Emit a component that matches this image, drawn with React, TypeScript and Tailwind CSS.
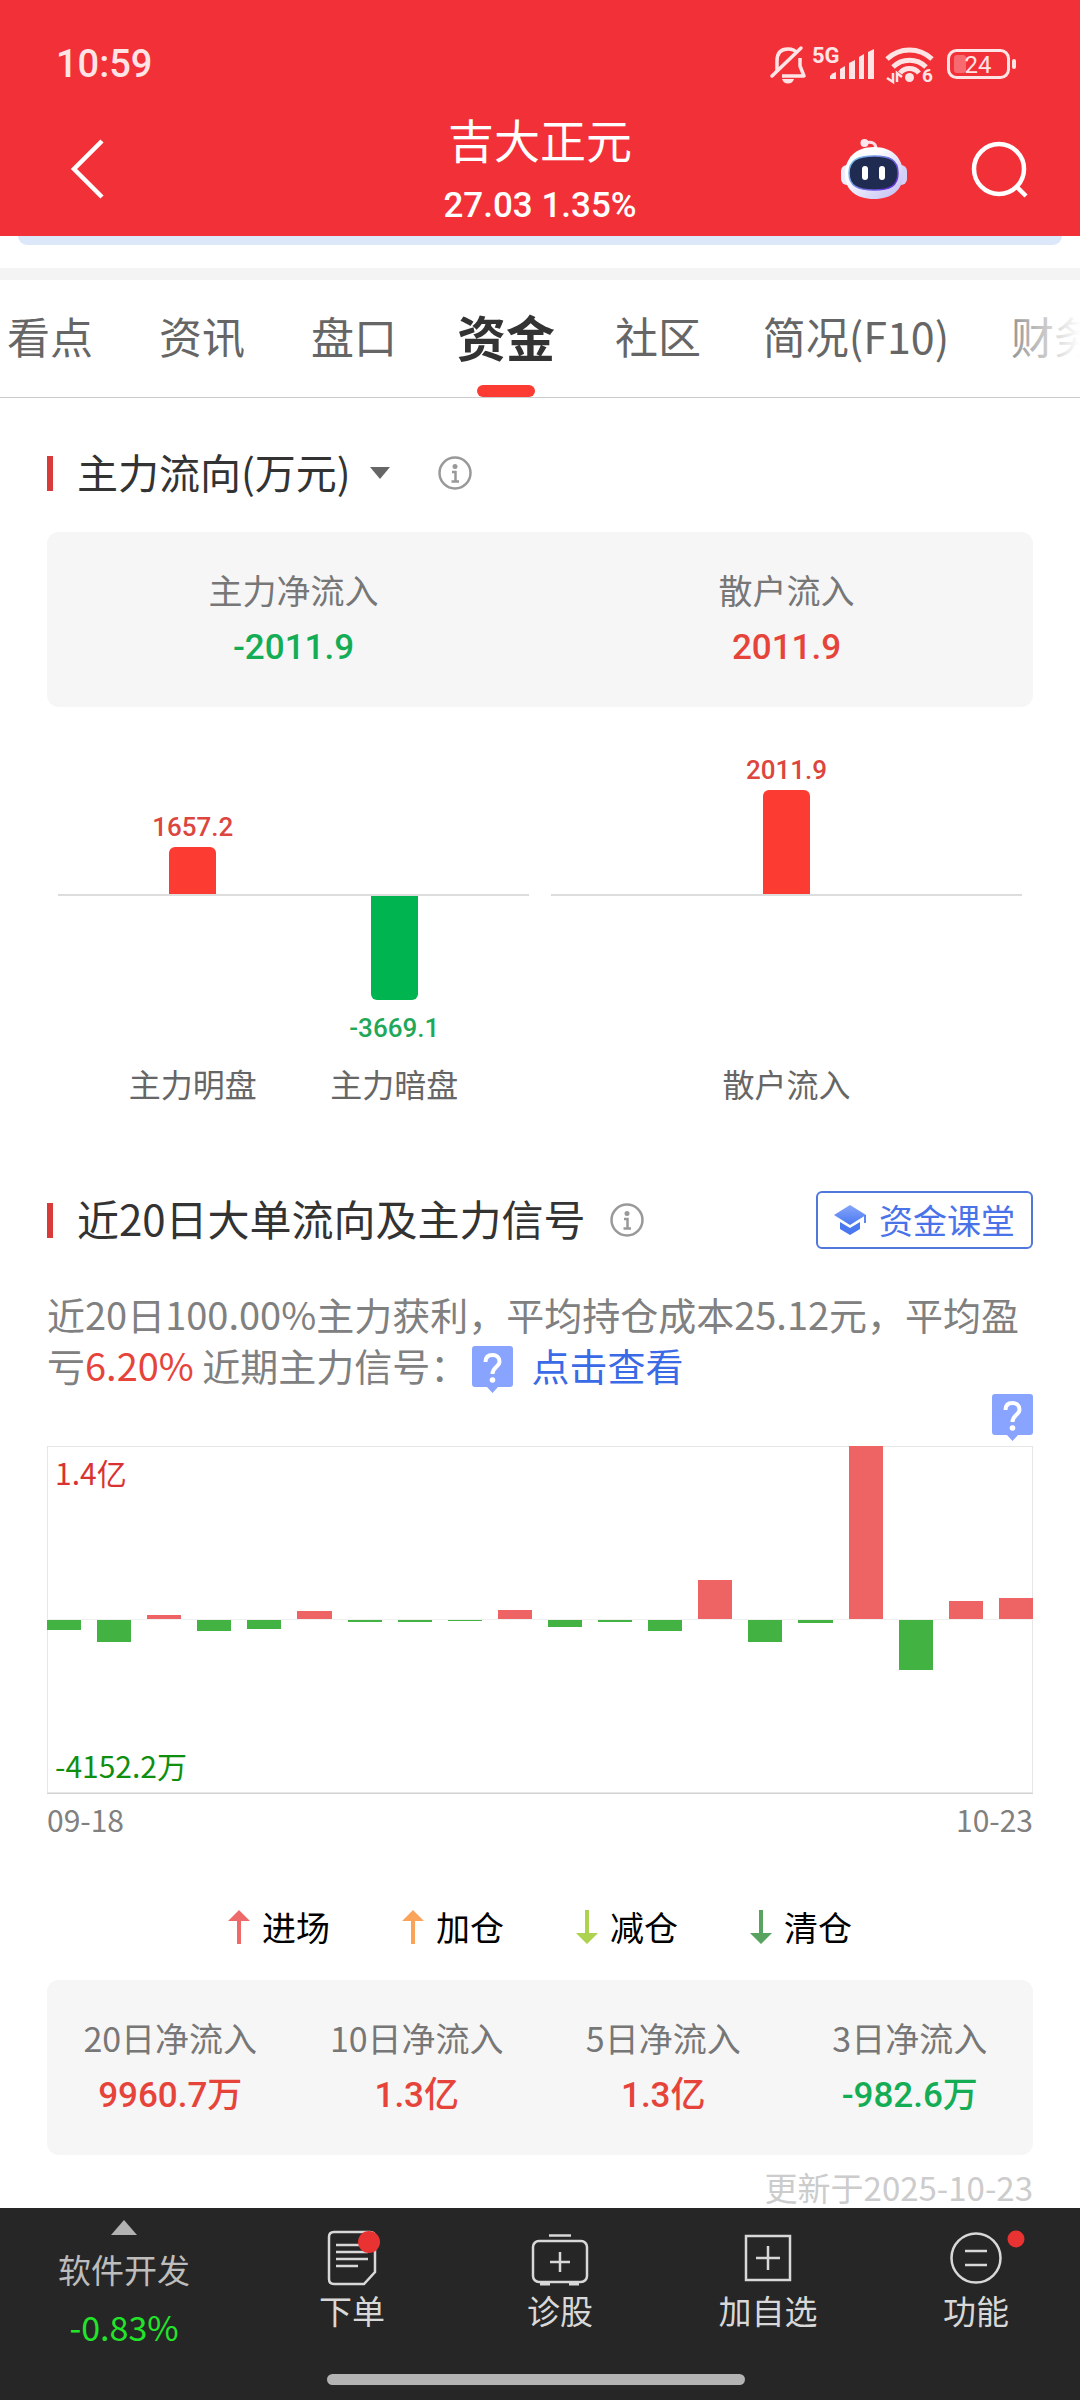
import { useState } from "react";

const TABS = ["看点", "资讯", "盘口", "资金", "社区", "简况(F10)", "财务"];

const MAIN_FLOW = [
  { label: "主力明盘", value: 1657.2 },
  { label: "主力暗盘", value: -3669.1 },
];

const RETAIL_FLOW = [{ label: "散户流入", value: 2011.9 }];

// Net inflow of the last 20 trading days, in 万元
const DAILY_FLOW = [
  -800, -1780, 320, -890, -730, 660, -160, -160, -40, 700,
  -560, -160, -890, 3140, -1780, -240, 14000, -4020, 1450, 1690,
];
const DAILY_MAX = 14000;

const LEGEND = [
  { label: "进场", up: true, color: "#ee6a6a" },
  { label: "加仓", up: true, color: "#f9a35b" },
  { label: "减仓", up: false, color: "#acd24f" },
  { label: "清仓", up: false, color: "#57a35f" },
];

const MAIN_STATS = [
  { label: "主力净流入", value: "-2011.9" },
  { label: "散户流入", value: "2011.9" },
];

const PERIOD_STATS = [
  { label: "20日净流入", value: "9960.7万" },
  { label: "10日净流入", value: "1.3亿" },
  { label: "5日净流入", value: "1.3亿" },
  { label: "3日净流入", value: "-982.6万" },
];

function StatusIcons() {
  return (
    <svg className="w-[248px] h-10 overflow-visible" viewBox="0 0 248 40" fill="none" stroke="#ffe4e5" aria-hidden="true">
      {/* muted bell */}
      <path d="M7 28 V17 C7 9 11 5 18 5 C22 5 25 6 27 9 M30 14 V22 L34 32 H12" strokeWidth="3.5" strokeLinejoin="round" />
      <path d="M2 32 L31 4" strokeWidth="3.5" strokeLinecap="round" />
      <path d="M12 35 H24 C23 38 21 39.500 18 39.500 C15 39.500 13 38 12 35 Z" fill="#ffe4e5" stroke="none" />
      {/* signal */}
      <text x="42" y="19" fontSize="22" fontWeight="700" fill="#ffe4e5" stroke="none">5G</text>
      <g fill="#ffe4e5" stroke="none">
        <path d="M60 35 V32 Q62 29 66 28 V35 Z" />
        <path d="M70 35 V25 L75 22 V35 Z" />
        <path d="M79 35 V19 L85 16 V35 Z" />
        <path d="M89 35 V13 L94 10 V35 Z" />
        <path d="M98 35 V8 L104 5 V35 Z" />
      </g>
      {/* wifi */}
      <path d="M117 15 C130 3 149 3 162 15" strokeWidth="5" />
      <path d="M123 23 C132 14 147 14 156 23" strokeWidth="5" />
      <path d="M130 29 C135 23 144 23 149 29" strokeWidth="5" />
      <circle cx="139.500" cy="33.500" r="4.500" fill="#ffe4e5" stroke="none" />
      <path d="M123 29 V38 L117 34 M127 38 V29 L132 33" strokeWidth="2.500" />
      <text x="152" y="38" fontSize="19" fontWeight="700" fill="#ffe4e5" stroke="none">6</text>
      {/* battery */}
      <rect x="178.500" y="6.500" width="60" height="27" rx="8" strokeWidth="3" />
      <rect x="184" y="11" width="12" height="18" rx="3" fill="#f76a70" stroke="none" />
      <rect x="242" y="15" width="4" height="10" rx="2" fill="#ffe4e5" stroke="none" />
      <text x="208" y="29" fontSize="24" textAnchor="middle" fill="#ffe4e5" stroke="none">24</text>
    </svg>
  );
}

function RobotIcon() {
  return (
    <svg className="w-[68px] h-[62px]" viewBox="0 0 68 62" aria-hidden="true">
      <defs>
        <linearGradient id="shell" x1="0" y1="0" x2="1" y2="1">
          <stop offset="0.3" stopColor="#ffffff" />
          <stop offset="1" stopColor="#bdb9f4" />
        </linearGradient>
        <linearGradient id="rim" x1="0" y1="0" x2="1" y2="0.600">
          <stop offset="0" stopColor="#7fd0f0" />
          <stop offset="1" stopColor="#6a35d8" />
        </linearGradient>
      </defs>
      <path d="M25 5 C32 3 36 5 36 11" fill="none" stroke="#fbdfe6" strokeWidth="3" />
      <circle cx="24.500" cy="5" r="4" fill="#fbe6ee" />
      <rect x="1" y="27" width="12" height="20" rx="6" fill="#ececfb" />
      <rect x="55" y="27" width="12" height="20" rx="6" fill="#d2d1f8" />
      <path d="M34 9 C52 9 63 20 63 36 C63 52 52 61 34 61 C16 61 5 52 5 36 C5 20 16 9 34 9 Z" fill="url(#shell)" />
      <path d="M34 18 C50 18 58 22 58 35 C58 48 50 52 34 52 C18 52 9 48 9 35 C9 22 18 18 34 18 Z" fill="#1f2b50" stroke="url(#rim)" strokeWidth="1.500" />
      <rect x="22" y="28" width="6" height="14" rx="3" fill="#fff" />
      <rect x="39" y="28" width="6" height="14" rx="3" fill="#fff" />
    </svg>
  );
}

function InfoButton() {
  return (
    <button aria-label="说明">
      <svg className="w-[34px] h-[34px]" viewBox="0 0 34 34" fill="none" stroke="#999" strokeWidth="2.500">
        <circle cx="17" cy="17" r="15.500" />
        <circle cx="17" cy="10.500" r="2.500" fill="#999" stroke="none" />
        <path d="M14 16 H17.500 V25 M13.500 25.500 H21" />
      </svg>
    </button>
  );
}

function QuestionBadge({ className = "" }) {
  return (
    <svg className={`w-[41px] h-[47px] ${className}`} viewBox="0 0 41 47" aria-hidden="true">
      <path d="M3 0 H38 Q41 0 41 3 V38 Q41 41 38 41 H26 L20.500 47 L15 41 H3 Q0 41 0 38 V3 Q0 0 3 0 Z" fill="#89a4ff" />
      <path d="M13.500 16 C13.500 11 16.500 9 20.500 9 C24.500 9 27.500 11.500 27.500 15.500 C27.500 21 20.500 20.500 20.500 28" fill="none" stroke="#fff" strokeWidth="4" />
      <circle cx="20.500" cy="34" r="2.800" fill="#fff" />
    </svg>
  );
}

function StatCard({ items }: { items: { label: string; value: string }[] }) {
  return (
    <dl className="flex rounded-xl bg-[#f6f6f6] pt-[30px] pb-[31px] text-center">
      {items.map((item) => (
        <div key={item.label} className="flex-1">
          <dt className="text-[34px] leading-[56px] text-[#777]">{item.label}</dt>
          <dd
            className={`mt-0.5 font-[Roboto,'Noto_Sans_CJK_SC',sans-serif] text-[35px] leading-[56px] font-medium ${
              item.value.startsWith("-") ? "text-[#14ad55]" : "text-[#e6443b]"
            }`}
          >
            {item.value}
          </dd>
        </div>
      ))}
    </dl>
  );
}

function FlowBars({ items }: { items: { label: string; value: number }[] }) {
  const max = Math.max(...items.map((i) => Math.abs(i.value)));
  const height = (v: number) => Math.round((Math.abs(v) / max) * 104);
  const valueClass = "font-[Roboto,sans-serif] text-[26px] leading-10 font-medium";

  return (
    <div className="flex-1 text-center">
      <div className="flex items-end h-[189px] px-[34px] border-b-2 border-[#ddd]">
        {items.map((i) => (
          <div key={i.label} className="flex-1">
            {i.value > 0 && (
              <>
                <p className={`${valueClass} text-[#dc463e]`}>{i.value}</p>
                <div className="w-[47px] mx-auto rounded-t-md bg-[#fc3c32]" style={{ height: height(i.value) }} />
              </>
            )}
          </div>
        ))}
      </div>
      <div className="flex h-[165px] px-[34px]">
        {items.map((i) => (
          <div key={i.label} className="flex-1">
            {i.value < 0 && (
              <>
                <div className="w-[47px] mx-auto mb-2 rounded-b-md bg-[#00b550]" style={{ height: height(i.value) }} />
                <p className={`${valueClass} text-[#1fa858]`}>{i.value}</p>
              </>
            )}
          </div>
        ))}
      </div>
      <div className="flex px-[34px]">
        {items.map((i) => (
          <p key={i.label} className="flex-1 text-[32px] leading-[44px] text-[#666]">{i.label}</p>
        ))}
      </div>
    </div>
  );
}

function DailyChart() {
  const pct = (v: number) => `${(Math.abs(v) / DAILY_MAX) * 100}%`;
  return (
    <div className="relative h-[348px] inset-ring-1 inset-ring-[#e6e6e6] border-b border-[#d4d4d4]">
      <div className="flex items-end gap-4 h-1/2 border-b border-[#f0f0f0]">
        {DAILY_FLOW.map((v, i) => (
          <div key={i} className="flex-1 bg-[#ee6465]" style={{ height: v > 0 ? pct(v) : 0 }} />
        ))}
      </div>
      <div className="flex items-start gap-4 h-1/2">
        {DAILY_FLOW.map((v, i) => (
          <div key={i} className="flex-1 bg-[#42b342]" style={{ height: v < 0 ? pct(v) : 0 }} />
        ))}
      </div>
      <span className="absolute left-2 top-1.5 text-[30px] leading-10 text-[#d93232]">1.4亿</span>
      <span className="absolute left-2 bottom-2 text-[30px] leading-10 text-[#0f8f0f]">-4152.2万</span>
    </div>
  );
}

function SectionBar() {
  return <span className="w-[6px] h-[35px] mr-6 bg-[#d93a3a]" />;
}

export default function App() {
  const [active, setActive] = useState("资金");

  return (
    <div className="min-h-screen flex flex-col overflow-x-hidden bg-white font-['Noto_Sans_CJK_SC',sans-serif]">
      {/* Header */}
      <header className="bg-[#f23038] pb-[11px] text-white">
        <div className="flex items-center justify-between h-28 pt-4 pl-14 pr-[62px] font-[Roboto,sans-serif]">
          <span className="text-[38px] font-medium text-[#ffe4e5]">10:59</span>
          <StatusIcons />
        </div>
        <div className="grid grid-cols-[1fr_auto_1fr] items-center">
          <button aria-label="返回" className="justify-self-start ml-[70px]">
            <svg className="w-9 h-[60px]" viewBox="0 0 36 60" fill="none" stroke="#fff" strokeWidth="4.500">
              <path d="M32 2 L4 30 L32 58" />
            </svg>
          </button>
          <div className="text-center">
            <h1 className="text-[46px] leading-[52px]">吉大正元</h1>
            <p className="mt-[23px] font-[Roboto,sans-serif] text-[35px] leading-[38px] font-medium">27.03 1.35%</p>
          </div>
          <div className="flex items-center justify-end gap-[62px] pr-[52px]">
            <button aria-label="智能助手">
              <RobotIcon />
            </button>
            <button aria-label="搜索">
              <svg className="w-[58px] h-[58px]" viewBox="0 0 58 58" fill="none" stroke="#fff" strokeWidth="4.500">
                <circle cx="29" cy="29" r="25" />
                <path d="M46 46 L56 56" />
              </svg>
            </button>
          </div>
        </div>
      </header>

      <div className="h-[9px] mx-[18px] mb-[23px] rounded-b-xl bg-[#dce8fa]" />
      <div className="h-3 bg-[#f4f4f4]" />

      {/* Tabs */}
      <nav className="relative flex gap-[66px] h-[118px] pl-[7px] overflow-hidden border-b border-[#ccc]">
        {TABS.map((tab) => (
          <button
            key={tab}
            onClick={() => setActive(tab)}
            className={`relative flex shrink-0 items-center justify-center pb-1.5 whitespace-nowrap ${
              tab.length === 2 ? "w-[86px]" : "w-[178px]"
            } ${active === tab ? "text-[49px] font-bold text-[#333]" : "text-[43px] text-[#666]"}`}
          >
            {tab}
            {active === tab && (
              <span className="absolute bottom-0 left-1/2 -translate-x-1/2 w-[58px] h-3 rounded-full bg-[#fc3c32]" />
            )}
          </button>
        ))}
        <div className="absolute right-0 inset-y-0 w-20 bg-linear-to-r from-white/20 to-white" />
      </nav>

      <main className="px-[47px]">
        {/* Main capital flow */}
        <div className="flex items-center h-[60px] mt-[45px] mb-[29px]">
          <SectionBar />
          <label className="flex items-center">
            <select aria-label="资金流向单位" className="appearance-none pb-1 text-[41px] leading-[56px] text-[#333]">
              <option>主力流向(万元)</option>
            </select>
            <svg className="w-5 h-3 ml-[19px]" viewBox="0 0 20 12" fill="#666">
              <path d="M0 0 H20 L10 12 Z" />
            </svg>
          </label>
          <span className="flex ml-12">
            <InfoButton />
          </span>
        </div>
        <StatCard items={MAIN_STATS} />
        <div className="flex gap-[22px] px-[11px]">
          <FlowBars items={MAIN_FLOW} />
          <FlowBars items={RETAIL_FLOW} />
        </div>

        {/* 20-day signal */}
        <div className="flex items-center h-[60px] mt-[85px] mb-[38px]">
          <SectionBar />
          <h2 className="mr-6 pb-1 text-[42px] leading-[56px] text-[#333]">近20日大单流向及主力信号</h2>
          <InfoButton />
          <button className="flex items-center gap-3 h-[58px] ml-auto pl-[15px] pr-4 border-2 border-[#5078dc] rounded-md text-[34px] text-[#4a73ea]">
            <svg className="w-[34px] h-8" viewBox="0 0 34 32" aria-hidden="true">
              <defs>
                <linearGradient id="cap" x1="0" y1="0" x2="0" y2="1">
                  <stop offset="0" stopColor="#86a6fa" />
                  <stop offset="1" stopColor="#4a78f0" />
                </linearGradient>
              </defs>
              <path d="M17 1 L33 11 L17 21 L1 11 Z" fill="url(#cap)" />
              <path d="M7 18 L17 24 L27 18 V25 L17 31 L7 25 Z" fill="#4a78f0" />
              <path d="M32 11 V19" stroke="#5c86f4" strokeWidth="2" />
            </svg>
            <span className="pb-0.5">资金课堂</span>
          </button>
        </div>
        <p className="text-[38px] leading-[51px] text-[#808080]">
          近20日100.00%主力获利，平均持仓成本25.12元，平均盈亏
          <span className="text-[#e6443b]">6.20%</span> 近期主力信号：
          <QuestionBadge className="inline-block -mt-1 -mb-0.5 ml-1 mr-[18px]" />
          <a href="#signal" className="text-[#3a6ae6]">点击查看</a>
        </p>

        <QuestionBadge className="block ml-auto mt-[3px] mb-[5px]" />
        <DailyChart />
        <div className="flex justify-between mt-[5px] text-[30px] leading-10 text-[#808080]">
          <span>09-18</span>
          <span>10-23</span>
        </div>

        <ul className="flex justify-center gap-[72px] mt-[64px] mb-[29px]">
          {LEGEND.map((item) => (
            <li key={item.label} className="flex items-center gap-3 text-[34px] leading-[48px] text-black">
              <svg className={`w-[22px] h-[34px] ${item.up ? "" : "rotate-180"}`} viewBox="0 0 22 34" fill={item.color}>
                <path d="M11 0 L22 11 H13 V34 H9 V11 H0 Z" />
              </svg>
              {item.label}
            </li>
          ))}
        </ul>
        <StatCard items={PERIOD_STATS} />
        <p className="mt-[13px] mb-0.5 text-right text-[33px] leading-[38px] text-[#ccc]">更新于2025-10-23</p>
      </main>

      {/* Bottom bar */}
      <footer className="bg-[#262626] pb-4 text-[#d8d8d8]">
        <div className="flex h-[166px] text-[33px] leading-[44px]">
          <button className="flex flex-col items-center w-[248px] pt-3 text-[#bdbdbd]">
            <svg className="w-[26px] h-[15px]" viewBox="0 0 26 15" fill="#b2b2b2">
              <path d="M13 0 L26 15 H0 Z" />
            </svg>
            <span className="mt-3">软件开发</span>
            <span className="mt-[14px] text-[34px] text-[#22e52a]">-0.83%</span>
          </button>
          <button className="flex flex-1 flex-col items-center pt-[22px]">
            <svg className="w-[62px] h-[56px] mb-0.5" viewBox="0 0 62 56" fill="none" stroke="#d8d8d8" strokeWidth="2.500">
              <path d="M13 2 H49 Q54 2 54 7 V42 L43 54 H13 Q8 54 8 49 V7 Q8 2 13 2 Z" />
              <path d="M15 15 H42 M15 22 H47 M15 29 H47 M15 36 H37" />
              <circle cx="48" cy="12" r="11" fill="#e93232" stroke="none" />
            </svg>
            下单
          </button>
          <button className="flex flex-1 flex-col items-center pt-[22px]">
            <svg className="w-[58px] h-[56px] mb-0.5" viewBox="0 0 58 56" fill="none" stroke="#d8d8d8" strokeWidth="2.500">
              <rect x="2" y="11" width="54" height="41" rx="6" />
              <path d="M18 5.500 H40 M29 22 V42 M19 32 H39" />
              <path d="M9 53.500 H19 M38 53.500 H48" strokeWidth="4" />
            </svg>
            诊股
          </button>
          <button className="flex flex-1 flex-col items-center pt-[22px]">
            <svg className="w-[56px] h-[56px] mb-0.5" viewBox="0 0 56 56" fill="none" stroke="#d8d8d8" strokeWidth="2.500">
              <rect x="6" y="6" width="44" height="44" />
              <path d="M28 16 V40 M16 28 H40" />
            </svg>
            加自选
          </button>
          <button className="flex flex-1 flex-col items-center pt-[22px]">
            <svg className="w-[98px] h-[56px] mb-0.5" viewBox="0 0 98 56" fill="none" stroke="#d8d8d8" strokeWidth="2.500">
              <circle cx="49" cy="28" r="24.500" />
              <path d="M38 21 H60 M38 35 H60" />
              <circle cx="89" cy="9" r="8.500" fill="#e93232" stroke="none" />
            </svg>
            功能
          </button>
        </div>
        <div className="flex justify-center pr-2">
          <span className="w-[418px] h-[11px] rounded-full bg-[#b3b3b3]" />
        </div>
      </footer>
    </div>
  );
}
